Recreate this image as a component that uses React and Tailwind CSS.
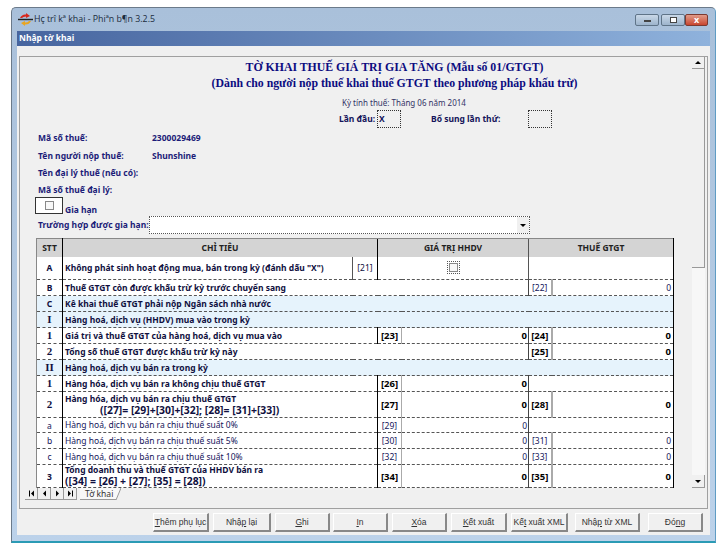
import React from 'react';

const DOTTED = '[border-bottom-style:dashed] border-b border-b-[#555]';

// cau truc cac dong trong bang: a = o so [..] cot HHDV, b = o so [..] cot thue
const rows = [
  { stt: 'B', text: 'Thuế GTGT còn được khấu trừ kỳ trước chuyển sang', b: '[22]', thinNum: true },
  { stt: 'C', text: 'Kê khai thuế GTGT phải nộp Ngân sách nhà nước', blue: true },
  { stt: 'I', text: 'Hàng hoá, dịch vụ (HHDV) mua vào trong kỳ', blue: true, serif: true },
  { stt: '1', text: 'Giá trị và thuế GTGT của hàng hoá, dịch vụ mua vào', a: '[23]', b: '[24]', serif: true },
  { stt: '2', text: 'Tổng số thuế GTGT  được khấu trừ kỳ này', b: '[25]', serif: true },
  { stt: 'II', text: 'Hàng hoá, dịch vụ bán ra trong kỳ', blue: true, serif: true },
  { stt: '1', text: 'Hàng hóa, dịch vụ bán ra không chịu thuế GTGT', a: '[26]', serif: true },
  {
    stt: '2',
    serif: true,
    h: 'h-[26px]',
    text: 'Hàng hóa, dịch vụ bán ra chịu thuế GTGT',
    sub: '([27]= [29]+[30]+[32]; [28]= [31]+[33])',
    subClass: 'pl-[35px] text-[10.4px] leading-[12px]',
    a: '[27]',
    b: '[28]',
  },
  { stt: 'a', thin: true, h: 'h-[15px]', text: 'Hàng hoá, dịch vụ bán ra chịu thuế suất 0%', a: '[29]' },
  { stt: 'b', thin: true, text: 'Hàng hoá, dịch vụ bán ra chịu thuế suất 5%', a: '[30]', b: '[31]' },
  { stt: 'c', thin: true, text: 'Hàng hoá, dịch vụ bán ra chịu thuế suất 10%', a: '[32]', b: '[33]' },
  {
    stt: '3',
    h: 'h-[23px]',
    text: 'Tổng doanh thu và thuế GTGT của HHDV bán  ra',
    sub: '([34] = [26] + [27]; [35] = [28])',
    subClass: 'text-[10.4px] leading-[12px]',
    a: '[34]',
    b: '[35]',
  },
];

const buttons = [
  { pre: '', key: 'T', post: 'hêm phụ lục', w: 'w-[56px]', ml: 'ml-0' },
  { pre: 'Nhậ', key: 'p', post: ' lại', w: 'w-[58px]', ml: 'ml-[4px]' },
  { pre: '', key: 'G', post: 'hi', w: 'w-[55px]', ml: 'ml-[4px]' },
  { pre: '', key: 'I', post: 'n', w: 'w-[55px]', ml: 'ml-[3px]' },
  { pre: '', key: 'X', post: 'óa', w: 'w-[55px]', ml: 'ml-[4px]' },
  { pre: '', key: 'K', post: 'ết xuất', w: 'w-[56px]', ml: 'ml-[4px]' },
  { pre: 'Kế', key: 't', post: ' xuất XML', w: 'w-[57px]', ml: 'ml-[4px]' },
  { pre: 'Nhậ', key: 'p', post: ' từ XML', w: 'w-[65px]', ml: 'ml-[7px]' },
  { pre: 'Đó', key: 'n', post: 'g', w: 'w-[55px]', ml: 'ml-[8px]' },
];

function Row({ row }) {
  const weight = row.thin ? 'font-normal' : 'font-bold text-[#101040]';
  const bg = row.blue ? 'bg-[#e6f3fc]' : 'bg-white';
  const cell = `${DOTTED} ${bg}`;
  const numFont = row.thin || row.thinNum ? 'font-normal' : 'font-bold text-[9.5px] text-black';
  const stt = (
    <td className={`${cell} border-l border-l-[#888] border-r border-r-black text-center ${weight} ${row.serif ? "font-['Liberation_Serif',serif] text-[11px]" : ''}`}>
      {row.stt}
    </td>
  );
  const last = 'border-r border-r-black';

  if (row.blue) {
    return (
      <tr className="h-[16px]">
        {stt}
        <td colSpan={6} className={`${cell} ${last} ${weight} pl-[2px]`}>{row.text}</td>
      </tr>
    );
  }

  const numB = row.b ? (
    <>
      <td className={`${cell} border-l border-l-[#444] border-r-2 border-r-[#aaa] text-center ${numFont}`}>{row.b}</td>
      <td className={`${cell} ${last} text-right pr-[2px] ${numFont}`}>0</td>
    </>
  ) : (
    <td colSpan={2} className={`${cell} border-l border-l-[#444] ${last}`}></td>
  );

  if (!row.a) {
    return (
      <tr className="h-[16px]">
        {stt}
        <td colSpan={4} className={`${cell} ${weight} pl-[2px]`}>{row.text}</td>
        {numB}
      </tr>
    );
  }

  return (
    <tr className={row.h || 'h-[16px]'}>
      {stt}
      <td colSpan={2} className={`${cell} ${weight} pl-[2px] leading-[10px]`}>
        {row.text}
        {row.sub && <div className={row.subClass}>{row.sub}</div>}
      </td>
      <td className={`${cell} border-l border-l-black border-r border-r-[#aaa] text-center ${numFont}`}>{row.a}</td>
      <td className={`${cell} text-right pr-[1px] ${numFont}`}>0</td>
      {numB}
    </tr>
  );
}

function Field({ label, value, className }) {
  return (
    <div className={`flex font-bold text-[#1c1c78] ${className}`}>
      <span className="w-[114px]">{label}</span>
      {value && <span>{value}</span>}
    </div>
  );
}

function NavIcon({ kind }) {
  return (
    <svg width="7" height="7" viewBox="0 0 7 7" fill="black">
      {kind === 'first' && <path d="M1 0.5h1v6H1z M6 0.5v6L3 3.5z" />}
      {kind === 'prev' && <path d="M5 0.5v6L2 3.5z" />}
      {kind === 'next' && <path d="M2 0.5v6L5 3.5z" />}
      {kind === 'last' && <path d="M5 0.5h1v6H5z M1 0.5v6L4 3.5z" />}
    </svg>
  );
}

export default function App() {
  return (
    <div className="w-[727px] h-[556px] bg-white pt-[7px] pl-[11px] overflow-hidden whitespace-nowrap font-['Noto_Sans',sans-serif] text-[8.5px] text-[#14145a]">
      <div className="w-[705px] h-[536px] flex flex-col rounded-t-[5px] border border-[#6b7a8a] border-r-[#5f9cc4] border-b-[#2b9bb5] border-b-2 bg-gradient-to-b from-[#a9c0da] to-[#bcd2ea]">
        {/* thanh tieu de */}
        <div className="h-[23px] flex items-center pl-[6px] pr-[7px] shrink-0">
          <svg width="15" height="13" viewBox="0 0 15 13" className="mr-[1px]">
            <path d="M2 5 Q4 1 8 1.5 L8 0 L12 3 L8 5 L8 3.5 Q5 3.5 4 5 Z" fill="#d8261c" />
            <path d="M13 8 Q11 12 7 11.5 L7 13 L3 10 L7 8 L7 9.5 Q10 9.5 11 8 Z" fill="#e9a520" />
            <path d="M0 6.5 H15" stroke="#222" strokeWidth="1.4" />
          </svg>
          <span className="text-[8.8px] text-[#1b2b3c] font-['Open_Sans',sans-serif]">Hç trî kª khai - Phiªn b¶n 3.2.5</span>
          <div className="ml-auto flex items-center">
            <div className="w-[24px] h-[12px] mr-[2px] rounded-[2px] border border-[#5f7488] bg-gradient-to-b from-[#c9d8e8] to-[#9db4cc] flex items-center justify-center">
              <div className="w-[7px] h-[2px] bg-white border border-[#444] mt-[2px]"></div>
            </div>
            <div className="w-[24px] h-[12px] rounded-[2px] border border-[#5f7488] bg-gradient-to-b from-[#c9d8e8] to-[#9db4cc] flex items-center justify-center">
              <div className="w-[7px] h-[6px] bg-white border border-[#444]"></div>
            </div>
            <div className="w-[23px] h-[12px] rounded-[2px] border border-[#7c3a30] bg-gradient-to-b from-[#e09a88] to-[#c8452f] flex items-center justify-center text-white text-[9px] font-bold leading-none">
              x
            </div>
          </div>
        </div>

        <div className="flex-1 flex flex-col mx-[5px] mb-[6px] min-h-0">
          {/* thanh cua so con */}
          <div className="h-[15px] shrink-0 bg-gradient-to-r from-[#47659f] to-[#8fb2dc] text-white font-bold text-[8.5px] leading-[14px] pl-[2px]">
            Nhập tờ khai
          </div>

          <div className="flex-1 flex flex-col min-h-0 bg-[#f0f0f0] pt-[10px] px-[2px]">
            <div className="h-[453px] shrink-0 flex flex-col border border-[#a0a0a0]">
              <div className="h-[431px] flex shrink-0">
                {/* noi dung to khai */}
                <div className="w-[672px] h-full overflow-hidden pl-[16px] shrink-0">
                  <div className="pl-[62px] pr-[1px] text-center font-['Liberation_Serif',serif] font-bold text-[#0c0c80] text-[11.8px] leading-[16px] pt-[2px]">
                    <div>TỜ KHAI THUẾ GIÁ TRỊ GIA TĂNG (Mẫu số 01/GTGT)</div>
                    <div>(Dành cho người nộp thuế khai thuế GTGT theo phương pháp khấu trừ)</div>
                  </div>
                  <div className="mt-[6px] pl-[306px] h-[12px] leading-[12px] text-[8px] text-[#333366]">Kỳ tính thuế: Tháng 06 năm 2014</div>
                  <div className="flex items-center h-[18px] mt-[1px] pl-[303px] font-bold">
                    <span className="w-[38px]">Lần đầu:</span>
                    <div className="w-[24px] h-[18px] border border-dotted border-[#333] pl-[1px] leading-[16px]">X</div>
                    <span className="ml-[30px] w-[97px]">Bổ sung lần thứ:</span>
                    <div className="w-[24px] h-[18px] border border-dotted border-[#333]"></div>
                  </div>
                  <div className="pl-[2px] mt-[4px] leading-[12px]">
                    <Field label="Mã số thuế:" value="2300029469" className="h-[18px]" />
                    <Field label="Tên người nộp thuế:" value="Shunshine" className="h-[17px]" />
                    <Field label="Tên đại lý thuế (nếu có):" className="h-[17px]" />
                    <Field label="Mã số thuế đại lý:" className="h-[13px]" />
                  </div>
                  <div className="flex items-end h-[17px] -ml-[1px]">
                    <div className="w-[28px] h-[17px] border border-[#333] bg-white flex items-center justify-center">
                      <div className="w-[9px] h-[9px] border border-[#888] bg-[#f8f8f8]"></div>
                    </div>
                    <span className="ml-[2px] font-bold text-[#1c1c78] leading-[9px]">Gia hạn</span>
                  </div>
                  <div className="flex items-center mt-[2px] h-[18px] pl-[2px]">
                    <span className="w-[111px] font-bold text-[#1c1c78]">Trường hợp được gia hạn:</span>
                    <div className="w-[381px] h-[18px] border border-dotted border-[#555] bg-white flex justify-end items-center">
                      <div className="w-[12px] h-[16px] bg-[#f0f0f0] flex items-center justify-center">
                        <div className="w-0 h-0 border-l-[3px] border-r-[3px] border-t-[3px] border-l-transparent border-r-transparent border-t-black"></div>
                      </div>
                    </div>
                  </div>

                  <table className="mt-[4px] w-[637px] table-fixed border-collapse leading-[11px]">
                    <colgroup>
                      <col className="w-[26px]" />
                      <col className="w-[290px]" />
                      <col className="w-[25px]" />
                      <col className="w-[24px]" />
                      <col className="w-[127px]" />
                      <col className="w-[23px]" />
                      <col className="w-[122px]" />
                    </colgroup>
                    <tbody>
                      <tr className="h-[18px] bg-[#d4d4d4] font-bold text-[#222]">
                        <td className="border-t border-t-[#888] border-l border-l-[#888] border-r border-r-black text-center">STT</td>
                        <td colSpan={2} className="border-t border-t-[#888] text-center">CHỈ TIÊU</td>
                        <td colSpan={2} className="border-t border-t-[#888] border-l border-l-black text-center">GIÁ TRỊ HHDV</td>
                        <td colSpan={2} className="border-t border-t-[#888] border-l border-l-[#555] border-r border-r-black text-center">THUẾ GTGT</td>
                      </tr>
                      <tr className="h-[23px] bg-white font-bold text-[#101040]">
                        <td className={`${DOTTED} border-l border-l-[#888] border-r border-r-black text-center`}>A</td>
                        <td className={`${DOTTED} pl-[2px]`}>Không phát sinh hoạt động mua, bán trong kỳ (đánh dấu "X")</td>
                        <td className={`${DOTTED} border-l border-l-[#555] font-normal text-center`}>[21]</td>
                        <td colSpan={2} className={`${DOTTED} border-l border-l-black`}>
                          <div className="mx-auto w-[13px] h-[13px] border border-dotted border-[#555] flex items-center justify-center">
                            <div className="w-[9px] h-[9px] border border-[#888] bg-[#f8f8f8]"></div>
                          </div>
                        </td>
                        <td colSpan={2} className={`${DOTTED} border-l border-l-[#555] border-r border-r-black`}></td>
                      </tr>
                      {rows.map((row, i) => (
                        <Row key={i} row={row} />
                      ))}
                    </tbody>
                  </table>
                </div>

                {/* thanh cuon */}
                <div className="w-[13px] flex flex-col h-full shrink-0 bg-[#f7f7f7]">
                  <div className="h-[12px] border-r border-b border-[#999] bg-[#f0f0f0] flex items-center justify-center">
                    <div className="w-0 h-0 border-l-[3px] border-r-[3px] border-b-[3px] border-l-transparent border-r-transparent border-b-black"></div>
                  </div>
                  <div className="h-[199px] bg-[#f0f0f0] border-r border-b border-[#999]"></div>
                  <div className="flex-1"></div>
                  <div className="h-[13px] border-r border-b border-[#999] bg-[#f0f0f0] flex items-center justify-center">
                    <div className="w-0 h-0 border-l-[3px] border-r-[3px] border-t-[3px] border-l-transparent border-r-transparent border-t-black"></div>
                  </div>
                </div>
              </div>

              {/* thanh sheet */}
              <div className="flex-1 flex items-start pl-[5px]">
                <div className="flex h-[12px]">
                  {['first', 'prev', 'next', 'last'].map((k) => (
                    <div key={k} className="w-[13px] h-[12px] border-r border-b border-[#999] bg-[#f0f0f0] flex items-center justify-center">
                      <NavIcon kind={k} />
                    </div>
                  ))}
                </div>
                <div className="ml-[3px] flex h-[12px]">
                  <div className="h-[12px] pl-[5px] pr-[3px] bg-[#f8f8f8] border-b border-[#999] text-[8.5px] leading-[11px] text-[#333]">Tờ khai</div>
                  <svg width="5" height="12" viewBox="0 0 5 12">
                    <path d="M0 0H5L0 12Z" fill="#f8f8f8" />
                    <path d="M5 0L0 12" stroke="#999" strokeWidth="1" />
                  </svg>
                </div>
              </div>
            </div>

            {/* cac nut */}
            <div className="flex pl-[134px] pt-[4px] text-[#333] font-['Liberation_Sans',sans-serif]">
              {buttons.map((b, i) => (
                <button
                  key={i}
                  className={`${b.w} ${b.ml} h-[19px] bg-[#f0f0f0] border-t border-l border-t-white border-l-white border-r-2 border-b-2 border-r-[#888] border-b-[#888] text-[8.5px] leading-none`}
                >
                  {b.pre}
                  <span className="underline">{b.key}</span>
                  {b.post}
                </button>
              ))}
            </div>
          </div>
        </div>
      </div>
    </div>
  );
}
